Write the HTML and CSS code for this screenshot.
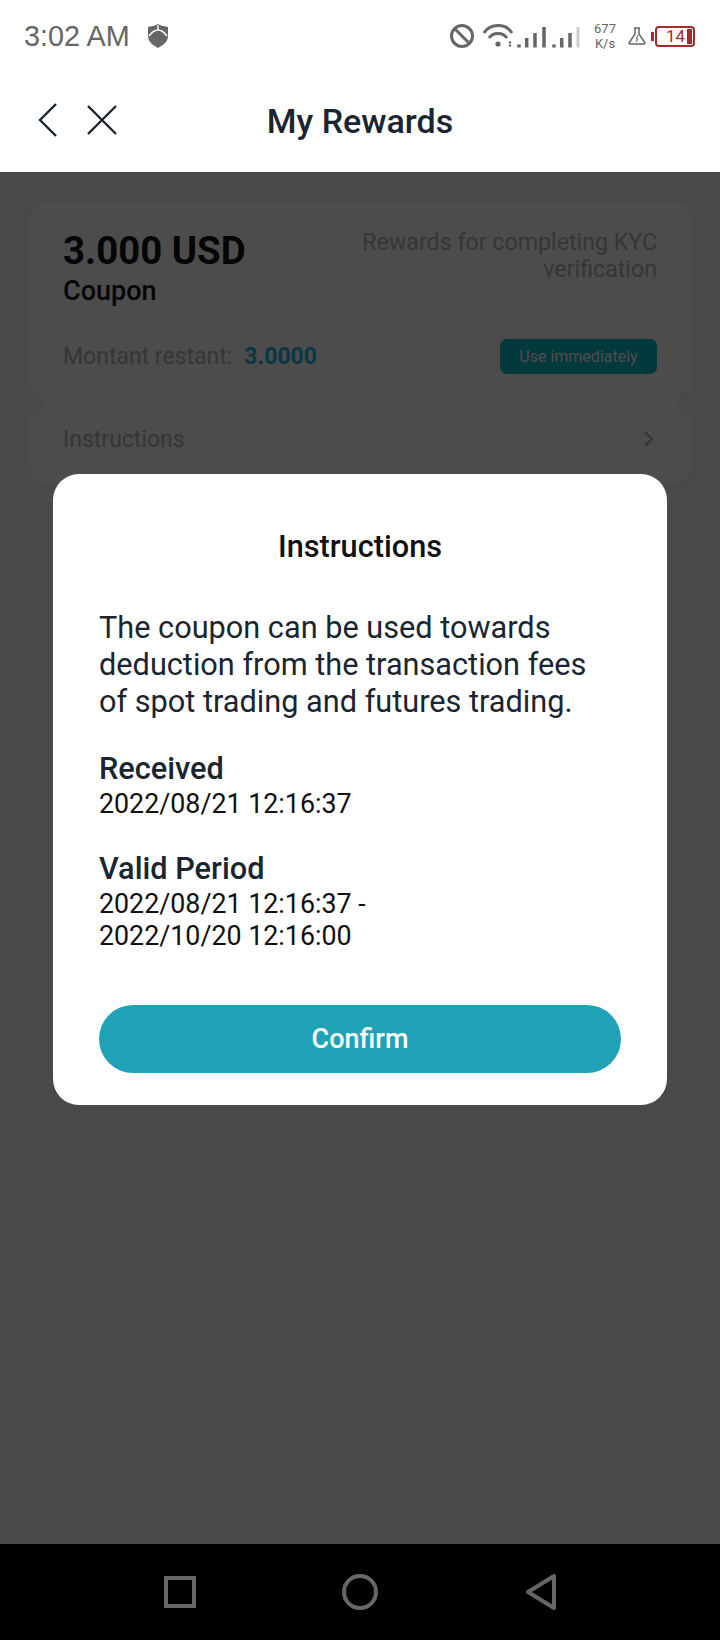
FILE: index.html
```html
<!DOCTYPE html>
<html lang="en">
<head>
    <meta charset="UTF-8">
    <meta name="viewport" content="width=device-width, initial-scale=1.0">
    <title>My Rewards</title>
    <link rel="stylesheet" href="styles.css">
</head>
<body>
<div class="statusbar">
    <div class="status__left">
        <span class="status__time">3:02 AM</span>
        <svg class="status__shield" width="20" height="24" viewBox="0 0 20 24">
            <path d="M10 0 C13 2 17 2 20 3 V12 C20 18 15 21 10 24 C5 21 0 18 0 12 V3 C3 2 7 2 10 0Z" fill="#666"/>
            <path d="M1 12 C4 8 7 6 10 6 C13 6 16 8 19 12 M10 1 V6" stroke="#fff" stroke-width="1.4" fill="none"/>
        </svg>
    </div>
    <div class="status__right">
        <svg width="24" height="24" viewBox="0 0 24 24" fill="none" stroke="#666" stroke-width="3">
            <circle cx="12" cy="12" r="10.5"/>
            <path d="M5 5 L19 19"/>
        </svg>
        <svg class="status__signal" width="98" height="26" viewBox="0 0 98 26" fill="none" stroke="#666">
            <!-- wifi -->
            <path d="M1 10 C7 0 23 0 29 10" stroke-width="3"/>
            <path d="M6 15 C10 9 20 9 24 15" stroke-width="3"/>
            <circle cx="15" cy="21" r="2.6" fill="#666" stroke="none"/>
            <circle cx="27" cy="19.5" r="1.2" fill="#666" stroke="none"/>
            <circle cx="27" cy="22.5" r="1.2" fill="#666" stroke="none"/>
            <!-- sim 1 -->
            <path d="M36 21.5 V24.5 M43.7 15 V24.5 M52 10 V24.5 M61 4 V24.5" stroke-width="3.5"/>
            <!-- sim 2 -->
            <path d="M71 21.5 V24.5 M78.7 15 V24.5 M87 10 V24.5" stroke-width="3.5"/>
            <path d="M95 4 V24.5" stroke="#ccc" stroke-width="3"/>
        </svg>
        <div class="status__speed"><span>677</span><span>K/s</span></div>
        <svg width="18" height="18" viewBox="0 0 18 18" fill="none" stroke="#666" stroke-width="1.5">
            <path d="M6 1 H12 M7 1 V7 L1 16 Q1 17 2 17 H16 Q17 17 17 16 L11 7 V1"/>
            <path d="M10 8 L8 12 H10 L8 15" stroke-width="1"/>
        </svg>
        <div class="battery">
            <span class="battery__nub"></span>
            <div class="battery__body">
                <span class="battery__num">14</span>
                <span class="battery__fill"></span>
            </div>
        </div>
    </div>
</div>

<div class="header">
    <div class="header__icons">
        <svg width="20" height="34" viewBox="0 0 20 34" fill="none" stroke="#1a2530" stroke-width="2.4">
            <path d="M18 1 L2 17 L18 33"/>
        </svg>
        <svg width="30" height="30" viewBox="0 0 30 30" fill="none" stroke="#1a2530" stroke-width="2.4">
            <path d="M1 1 L29 29 M29 1 L1 29"/>
        </svg>
    </div>
    <h1 class="header__title">My Rewards</h1>
</div>

<div class="main">
    <div class="coupon">
        <div class="coupon__top">
            <div class="coupon__head">
                <div>
                    <div class="coupon__amount">3.000 USD</div>
                    <div class="coupon__type">Coupon</div>
                </div>
                <div class="coupon__desc">Rewards for completing KYC verification</div>
            </div>
            <div class="coupon__foot">
                <div class="coupon__left">Montant restant:<b>3.0000</b></div>
                <button class="coupon__use" type="button">Use immediately</button>
            </div>
        </div>
        <div class="coupon__row">
            <span>Instructions</span>
            <svg class="coupon__arrow" width="9" height="16" viewBox="0 0 9 16" fill="none" stroke="#aaa" stroke-width="1.8">
                <path d="M1 1 L8 8 L1 15"/>
            </svg>
        </div>
    </div>

    <div class="scrim">
        <div class="modal">
            <h2 class="modal__title">Instructions</h2>
            <p class="modal__text">The coupon can be used towards deduction from the transaction fees of spot trading and futures trading.</p>
            <h3 class="modal__label">Received</h3>
            <p class="modal__value">2022/08/21 12:16:37</p>
            <h3 class="modal__label modal__label--second">Valid Period</h3>
            <p class="modal__value">2022/08/21 12:16:37 -<br>2022/10/20 12:16:00</p>
            <button class="modal__btn" type="button">Confirm</button>
        </div>
    </div>
</div>

<div class="navbar">
    <svg width="32" height="32" viewBox="0 0 32 32" fill="none" stroke="#666" stroke-width="4">
        <rect x="2" y="2" width="28" height="28"/>
    </svg>
    <svg width="38" height="38" viewBox="0 0 38 38" fill="none" stroke="#666" stroke-width="4">
        <circle cx="19" cy="19" r="16"/>
    </svg>
    <svg width="32" height="38" viewBox="0 0 32 38" fill="none" stroke="#666" stroke-width="4" stroke-linejoin="round">
        <path d="M4 19 L30 3 V35 Z"/>
    </svg>
</div>
</body>
</html>
```

FILE: styles.css
```css
* {
    box-sizing: border-box;
}

body {
    margin: 0;
    width: 720px;
    height: 1640px;
    display: flex;
    flex-direction: column;
    font-family: Roboto, "Liberation Sans", sans-serif;
    background-color: #fff;
    overflow: hidden;
}

h1, h2, h3, p {
    margin: 0;
}

button {
    border: none;
    font-family: inherit;
}

/* status bar */
.statusbar {
    height: 72px;
    padding: 0 24px;
    display: flex;
    align-items: center;
    justify-content: space-between;
}

.status__left {
    display: flex;
    align-items: center;
    gap: 18px;
}

.status__time {
    font-family: "Liberation Sans", sans-serif;
    font-size: 28.8px;
    color: #666;
}

.status__right {
    display: flex;
    align-items: center;
    margin-right: 1px;
}

.status__signal {
    margin-left: 9px;
}

.status__speed {
    display: flex;
    flex-direction: column;
    align-items: center;
    width: 22px;
    margin-left: 13px;
    margin-right: 12px;
    font-size: 13px;
    line-height: 15px;
    color: #666;
}

.battery {
    display: flex;
    align-items: center;
    margin-left: 5px;
}

.battery__nub {
    width: 3px;
    height: 9px;
    background-color: #a82a2a;
}

.battery__body {
    width: 40px;
    height: 21px;
    margin-left: 1px;
    padding: 0 1px 0 9px;
    border: 2px solid #a82a2a;
    border-radius: 4px;
    display: flex;
    align-items: center;
    justify-content: space-between;
}

.battery__num {
    font-size: 17px;
    color: #a82a2a;
}

.battery__fill {
    width: 5px;
    height: 15px;
    background-color: #a82a2a;
}

/* header */
.header {
    height: 100px;
    padding-bottom: 3px;
    position: relative;
    display: flex;
    align-items: center;
    justify-content: center;
}

.header__icons {
    position: absolute;
    left: 38px;
    top: 31px;
    display: flex;
    align-items: center;
    gap: 29px;
}

.header__title {
    font-size: 34px;
    font-weight: 500;
    color: #1a2530;
}

/* page behind the dialog */
.main {
    flex: 1;
    position: relative;
    padding: 30px 29px 0 30px;
    background-color: #f4f4f4;
}

.coupon {
    border-radius: 16px;
    background-color: #fff;
}

.coupon__top {
    height: 201px;
    padding: 27px 34px 0 33px;
    position: relative;
}

.coupon__top::before,
.coupon__top::after {
    content: "";
    position: absolute;
    bottom: -13px;
    width: 26px;
    height: 26px;
    border-radius: 50%;
    background-color: #f4f4f4;
}

.coupon__top::before {
    left: -13px;
}

.coupon__top::after {
    right: -13px;
}

.coupon__head {
    display: flex;
    justify-content: space-between;
}

.coupon__amount {
    font-size: 38.4px;
    line-height: 44px;
    font-weight: 700;
    color: #111;
}

.coupon__type {
    font-size: 27px;
    line-height: 36px;
    font-weight: 500;
    color: #111;
}

.coupon__desc {
    width: 320px;
    font-size: 23.2px;
    line-height: 27px;
    text-align: right;
    color: #b4b4b4;
}

.coupon__foot {
    margin-top: 30px;
    display: flex;
    align-items: center;
    justify-content: space-between;
}

.coupon__left {
    font-size: 23px;
    color: #b4b4b4;
}

.coupon__left b {
    margin-left: 12px;
    font-weight: 700;
    color: #20b8e0;
}

.coupon__use {
    width: 157px;
    height: 35px;
    border-radius: 7px;
    font-size: 16px;
    color: #fff;
    background-color: #05c0cc;
}

.coupon__row {
    height: 80px;
    padding: 0 33px 8px;
    display: flex;
    align-items: center;
    justify-content: space-between;
    font-size: 23px;
    color: #b4b4b4;
}

.coupon__arrow {
    margin-right: 5px;
}

/* dialog */
.scrim {
    position: absolute;
    inset: 0;
    padding: 302px 53px 0;
    background-color: rgba(0, 0, 0, 0.7);
}

.modal {
    height: 631px;
    padding: 50px 46px 0;
    border-radius: 26px;
    background-color: #fff;
    color: #1a2530;
}

.modal__title {
    font-size: 30.7px;
    line-height: 46px;
    font-weight: 500;
    text-align: center;
    color: #111;
}

.modal__text {
    margin-top: 39px;
    font-size: 30.7px;
    line-height: 37px;
}

.modal__label {
    margin-top: 30px;
    font-size: 30.7px;
    line-height: 38px;
    font-weight: 500;
}

.modal__label--second {
    margin-top: 30px;
}

.modal__value {
    font-size: 26.8px;
    line-height: 32px;
    color: #111;
}

.modal__btn {
    display: block;
    width: 100%;
    height: 68px;
    margin-top: 53px;
    border-radius: 34px;
    font-size: 27px;
    font-weight: 500;
    color: #fff;
    background-color: #1fa2b5;
}

/* android nav */
.navbar {
    height: 96px;
    display: flex;
    align-items: center;
    justify-content: space-between;
    padding: 0 164px;
    background-color: #000;
}
```
